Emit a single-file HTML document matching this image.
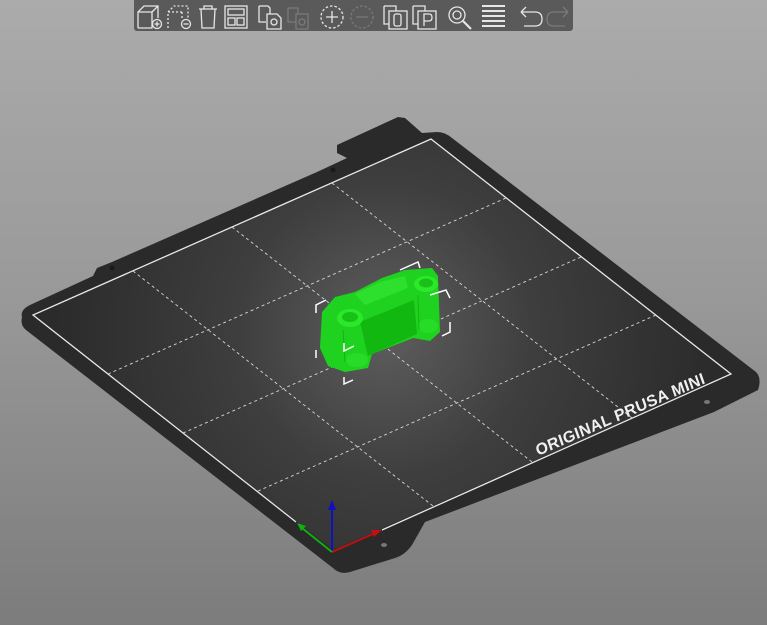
<!DOCTYPE html>
<html><head><meta charset="utf-8"><style>
html,body{margin:0;padding:0;width:767px;height:625px;overflow:hidden;}
body{background:linear-gradient(#ababab 0%,#9a9a9a 45%,#7c7c7c 100%);font-family:"Liberation Sans",sans-serif;}
svg{position:absolute;left:0;top:0}
</style></head><body>
<svg width="767" height="625" viewBox="0 0 767 625" xmlns="http://www.w3.org/2000/svg">
<defs>
<radialGradient id="bg" cx="385" cy="330" r="330" gradientUnits="userSpaceOnUse">
<stop offset="0" stop-color="#5e5e5e"/><stop offset="0.45" stop-color="#3e3e3e"/><stop offset="1" stop-color="#2b2b2b"/>
</radialGradient>
</defs>
<path d="M22,317 Q20,310 30,305 L93,276 L97,268 L112,262 L317,172 L347,158 L337,153 L337,145 L398,117 L405,118 L422,133 L437,132 Q445,132 452,138 L756,372 Q762,378 758,390 L714,412 L425,522 L412,545 Q405,555 395,558 L350,572 Q340,575 333,568 L26,330 Q20,325 22,317 Z" fill="#2a2a2a"/>
<polygon points="33,315 431,139 731,374 333,550" fill="url(#bg)"/>
<polyline points="296,522 33,315 431,139 731,374 382,530" fill="none" stroke="#e8e8e8" stroke-width="1.3"/>
<g stroke="#d8d8d8" stroke-width="0.9" stroke-dasharray="3,3" fill="none">
<line x1="108" y1="374" x2="506" y2="198"/>
<line x1="183" y1="433" x2="581" y2="257"/>
<line x1="258" y1="491" x2="656" y2="315"/>
<line x1="133" y1="271" x2="433" y2="506"/>
<line x1="232" y1="227" x2="532" y2="462"/>
<line x1="332" y1="183" x2="632" y2="418"/>
</g>
<circle cx="112" cy="268" r="2.5" fill="#1a1a1a"/>
<circle cx="333" cy="170" r="2.5" fill="#1a1a1a"/>
<ellipse cx="707" cy="402" rx="3" ry="2" fill="#777"/>
<ellipse cx="384" cy="545" rx="3" ry="2" fill="#777"/>
<text x="0" y="0" transform="translate(538,456) rotate(-23.5) skewX(-4)" font-family="Liberation Sans" font-weight="bold" font-size="16" fill="#f0f0f0" letter-spacing="0.4">ORIGINAL PRUSA MINI</text>
<g stroke-width="2" fill="none">
<line x1="332" y1="552" x2="332" y2="508" stroke="#1010c0"/>
<line x1="332" y1="552" x2="375" y2="533" stroke="#c01010"/>
<line x1="332" y1="552" x2="302" y2="528" stroke="#10b010"/>
</g>
<polygon points="332,500 328,510 336,510" fill="#1010c0"/>
<polygon points="382,530 371,530 374,537" fill="#c01010"/>
<polygon points="297,523 301,531 306,526" fill="#10b010"/>
<!-- car -->
<polygon points="322,312 335,297 355,292 382,278 405,270 432,268 438,276 440,332 430,341 413,338 372,354 368,368 345,372 328,366 320,348" fill="#1fd21f"/>
<polygon points="360,322 414,300 417,334 368,356" fill="#10b810"/>
<polygon points="355,294 380,282 405,276 408,288 365,305" fill="#2ee02e"/>
<ellipse cx="350" cy="318" rx="13" ry="9" fill="#2be82b"/>
<ellipse cx="350" cy="317" rx="8" ry="5" fill="#18c018"/>
<ellipse cx="426" cy="284" rx="12" ry="8" fill="#2be82b"/>
<ellipse cx="426" cy="283" rx="7" ry="4.5" fill="#18c018"/>
<ellipse cx="357" cy="360" rx="11" ry="7" fill="#27dc27"/>
<ellipse cx="428" cy="326" rx="10" ry="7" fill="#27dc27"/>
<line x1="343" y1="330" x2="345" y2="362" stroke="#14b414" stroke-width="1"/>
<line x1="418" y1="295" x2="419" y2="330" stroke="#14b414" stroke-width="1"/>
<g stroke="#fff" stroke-width="1.5" fill="none">
<polyline points="316,313 316,305 326,300"/>
<polyline points="316,350 316,358"/>
<polyline points="344,343 344,351 354,346"/>
<polyline points="344,377 344,384 353,380"/>
<polyline points="400,270 418,262 420,268"/>
<polyline points="430,295 446,290 450,298"/>
<polyline points="450,322 450,332 442,336"/>
</g>
</svg>
<div style="position:absolute;left:134px;top:0;width:439px;height:31px;background:#5a5a5a;border-radius:0 0 3px 3px;"></div>
<svg width="767" height="40" viewBox="0 0 767 40" style="position:absolute;left:0;top:0">
<g fill="none" stroke="#e6e6e6" stroke-width="1.3">
<path d="M138,28 V12 L144,6 H158 V18 M138,12 H152 V28 H138 M152,12 L158,6"/><circle cx="157" cy="24" r="4.5"/><path d="M154.5,24 H159.5 M157,21.5 V26.5"/>
<path d="M168,28 V12 L174,6 H188 V18 M168,12 H182 M182,12 V20" stroke-dasharray="2,2"/><circle cx="186" cy="24" r="4.5"/><path d="M183.5,24 H188.5"/>
<path d="M199,9 H217 M204,9 V6 H212 V9 M201,9 L202,28 H214 L215,9"/>
<rect x="225" y="6" width="22" height="22"/><rect x="228" y="9" width="16" height="6"/><rect x="228" y="18" width="7" height="7"/><rect x="237" y="18" width="7" height="7"/>
<path d="M259,6 H268 L270,8 V14 M259,6 V22 H266"/><path d="M267,14 H277 L281,18 V29 H267 Z"/><circle cx="274" cy="22" r="3"/>
<g stroke="#7a7a7a"><path d="M288,8 H298 V14 M288,8 V22 H296"/><path d="M296,14 H308 V29 H296 Z"/><circle cx="302" cy="22" r="3"/></g>
<circle cx="332" cy="17" r="11" stroke-dasharray="2.5,2"/><path d="M326,17 H338 M332,11 V23"/>
<g stroke="#7a7a7a"><circle cx="362" cy="17" r="11" stroke-dasharray="2.5,2"/><path d="M356,17 H368"/></g>
<path d="M384,6 H396 V11 M384,6 V24 H389"/><rect x="389" y="11" width="18" height="18"/><rect x="394" y="14" width="7" height="12" rx="2"/>
<path d="M413,6 H425 V11 M413,6 V24 H418"/><rect x="418" y="11" width="18" height="18"/><path d="M424,26 V14 H429 Q432,14 432,17.5 Q432,21 429,21 H424"/>
<circle cx="457" cy="15" r="8"/><circle cx="457" cy="15" r="4"/><path d="M463,21 L471,29" stroke-width="2.2"/>
<g stroke-width="2"><path d="M482,6 H505 M482,11 H505 M482,16 H505 M482,21 H505 M482,26 H505"/></g>
<path d="M521,12 H535 Q542,12 542,19 Q542,26 535,26 H524 M521,12 L526,7 M521,12 L526,17"/>
<g stroke="#7a7a7a"><path d="M568,12 H554 Q547,12 547,19 Q547,26 554,26 H565 M568,12 L563,7 M568,12 L563,17"/></g>
</g>
</svg>
</body></html>
